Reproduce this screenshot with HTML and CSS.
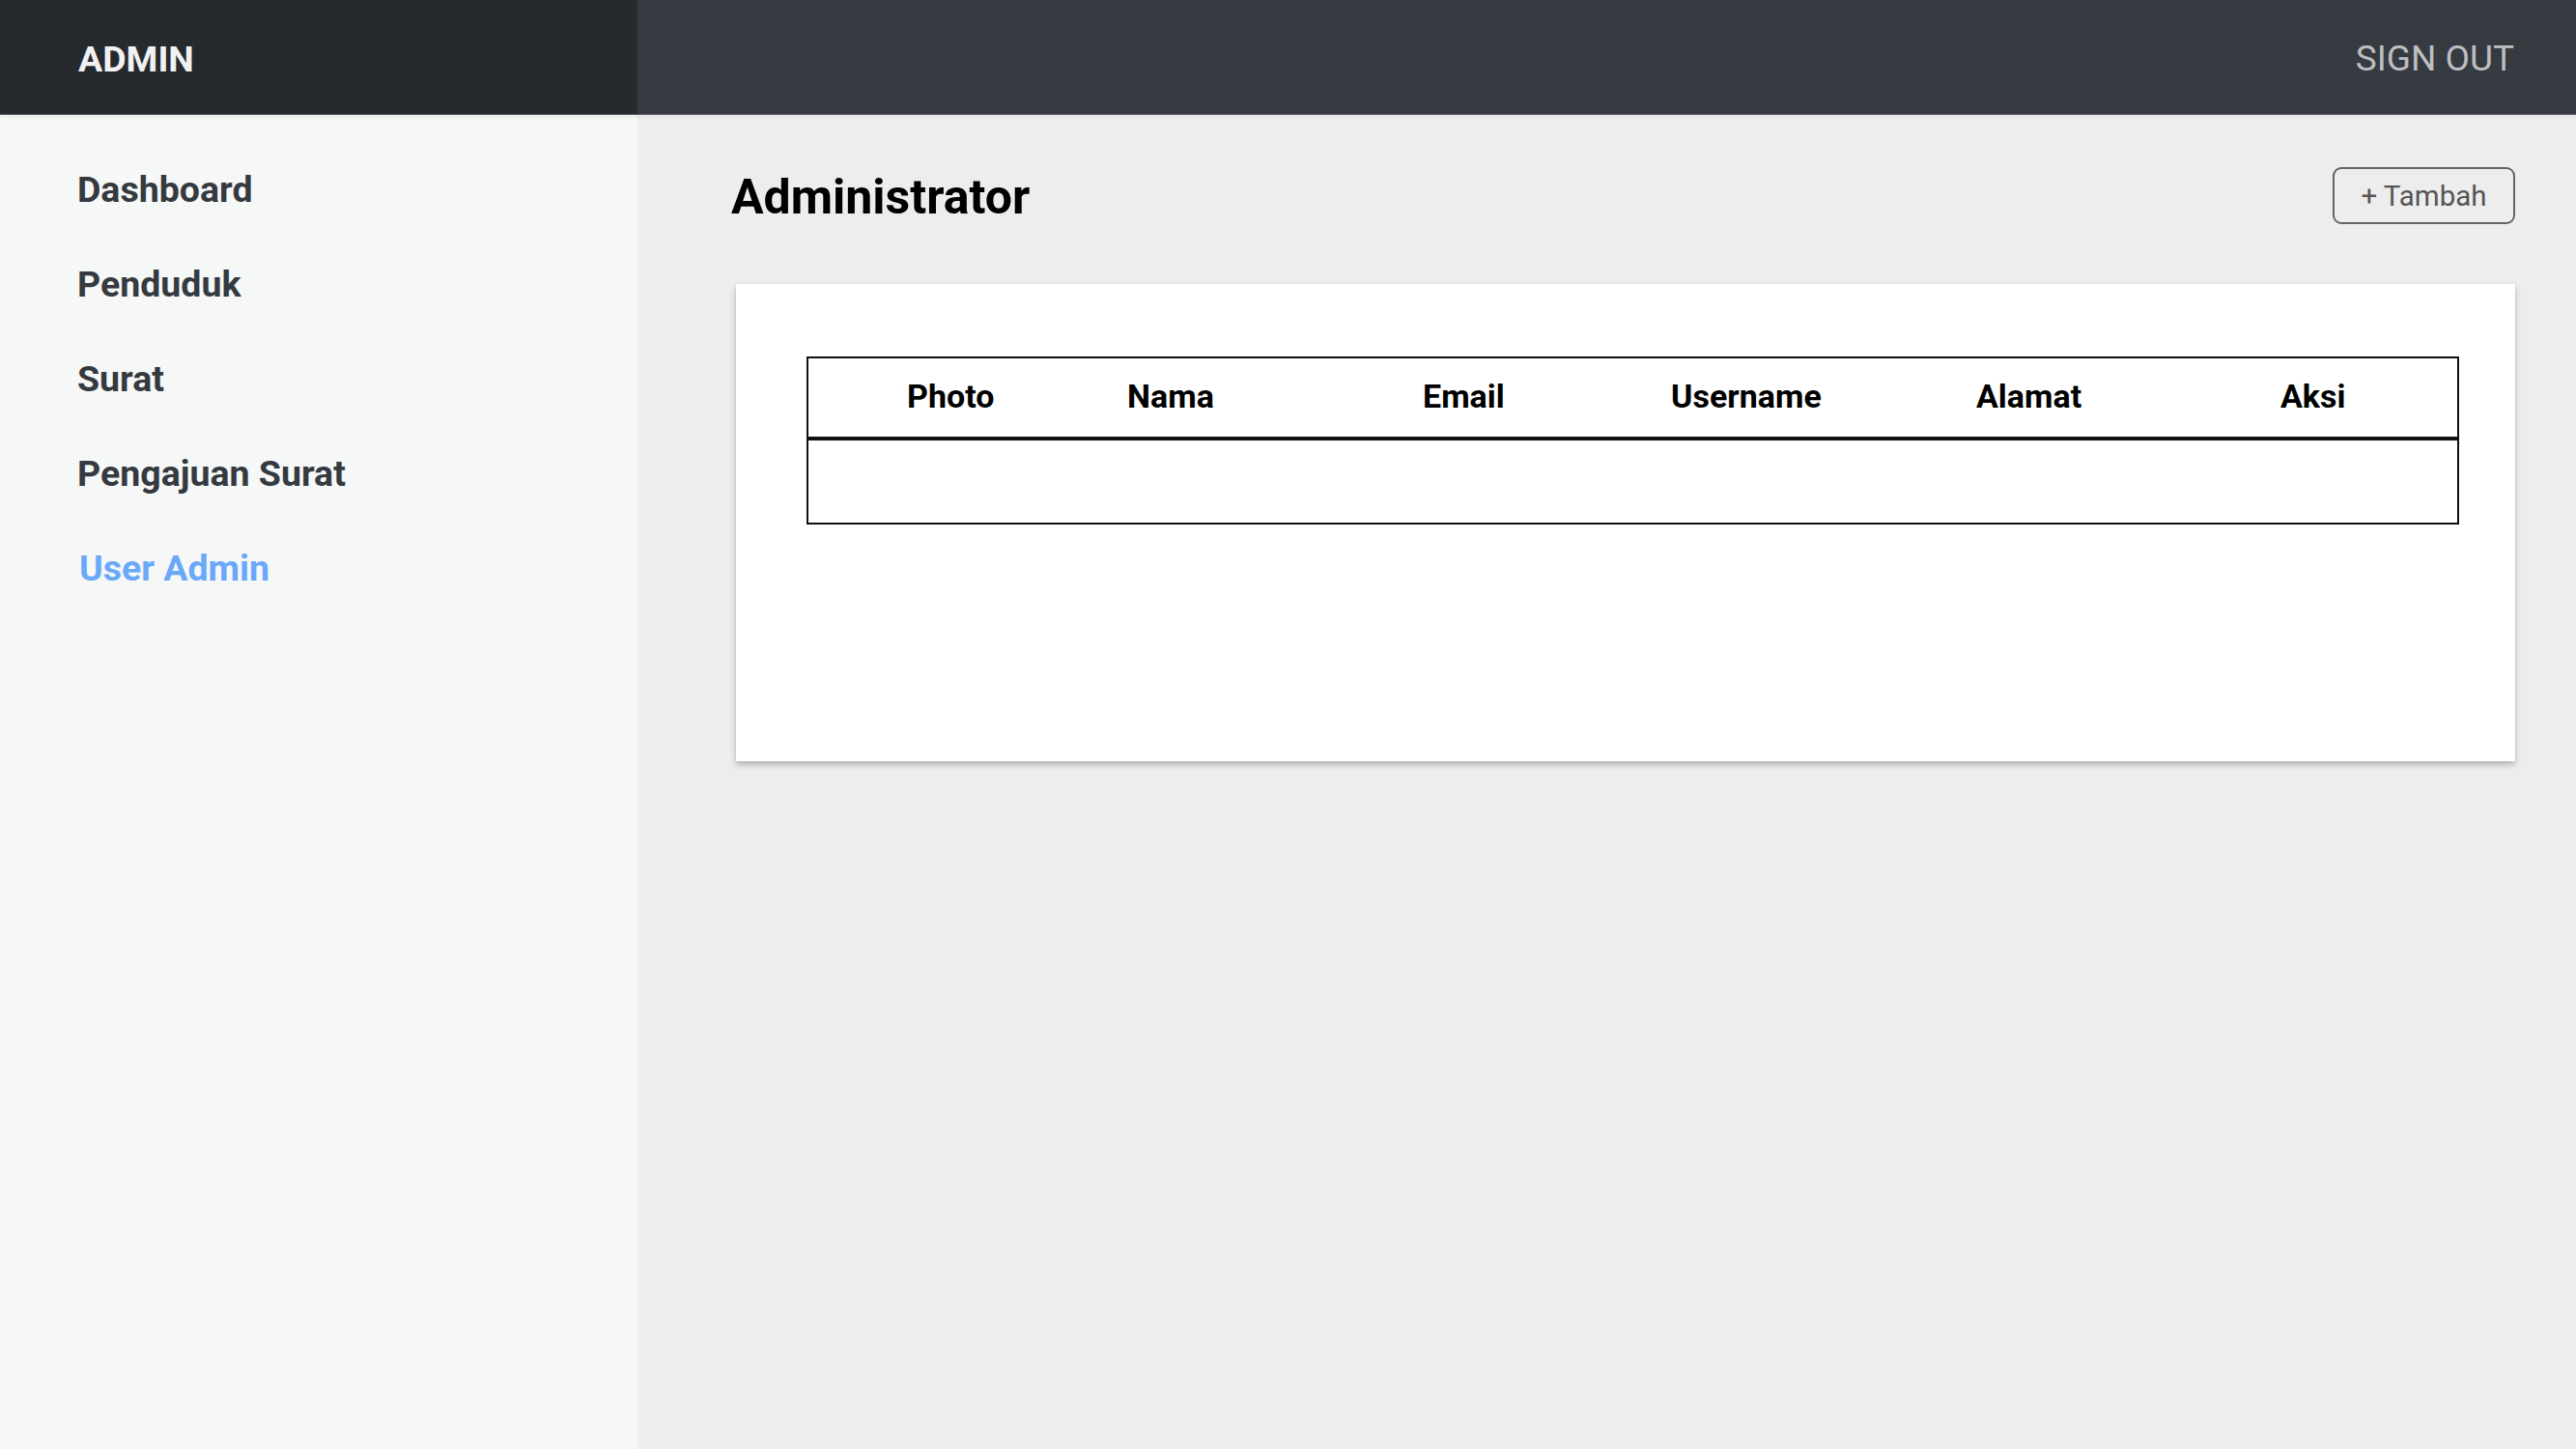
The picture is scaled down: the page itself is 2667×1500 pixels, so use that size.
FILE: index.html
```html
<!DOCTYPE html>
<html lang="id">
<head>
<meta charset="utf-8">
<title>Administrator</title>
<link rel="stylesheet" href="styles.css">
</head>
<body>
<header class="topbar">
  <div class="brand">ADMIN</div>
  <div class="topbar-right"><a class="signout" href="#">SIGN OUT</a></div>
</header>
<div class="layout">
  <nav class="sidebar">
    <a class="nav-link" href="#">Dashboard</a>
    <a class="nav-link" href="#">Penduduk</a>
    <a class="nav-link" href="#">Surat</a>
    <a class="nav-link" href="#">Pengajuan Surat</a>
    <a class="nav-link active" href="#">User Admin</a>
  </nav>
  <main class="main">
    <div class="page-head">
      <h1 class="page-title">Administrator</h1>
      <button class="btn-add" type="button">+ Tambah</button>
    </div>
    <section class="card">
      <table class="data-table">
        <colgroup>
          <col class="c1"><col class="c2"><col class="c3"><col class="c4"><col class="c5"><col class="c6">
        </colgroup>
        <thead>
          <tr>
            <th class="first">Photo</th>
            <th>Nama</th>
            <th>Email</th>
            <th>Username</th>
            <th>Alamat</th>
            <th>Aksi</th>
          </tr>
        </thead>
        <tbody>
          <tr><td></td><td></td><td></td><td></td><td></td><td></td></tr>
        </tbody>
      </table>
    </section>
  </main>
</div>
</body>
</html>
```

FILE: styles.css
```css
* { box-sizing: border-box; }

html, body {
  margin: 0;
  padding: 0;
}

body {
  font-family: Roboto, "Liberation Sans", Arial, sans-serif;
  background: #ededed;
  min-height: 1500px;
}

.topbar {
  display: flex;
  height: 119px;
  border-bottom: 1px solid #5b5f64;
  box-shadow: 0 2px 4px rgba(0, 0, 0, 0.06);
  position: relative;
  z-index: 1;
}

.brand {
  width: 660px;
  background: #26292e;
  color: #f1f1f1;
  font-size: 37.5px;
  font-weight: 700;
  display: flex;
  align-items: center;
  padding: 3px 0 0 81px;
}

.topbar-right {
  flex: 1;
  background: #363a41;
  display: flex;
  align-items: center;
  justify-content: flex-end;
  padding: 3px 64px 0 0;
}

.signout {
  color: #bdbec0;
  font-size: 37px;
  text-decoration: none;
}

.layout {
  display: flex;
  min-height: 1381px;
}

.sidebar {
  width: 660px;
  background: #f6f7f7;
  padding-top: 28px;
  display: flex;
  flex-direction: column;
}

.nav-link {
  display: block;
  padding-left: 80px;
  font-size: 37.5px;
  line-height: 98px;
  font-weight: 700;
  color: #343a40;
  text-decoration: none;
}

.nav-link.active {
  color: #6aa8f9;
  padding-left: 82px;
}

.main {
  flex: 1;
  background: #ededed;
  padding: 54px 63px 0 97px;
}

.page-head {
  display: flex;
  justify-content: space-between;
  align-items: flex-start;
}

.page-title {
  margin: 0;
  font-size: 50px;
  line-height: 62px;
  font-weight: 700;
  color: #000;
}

.btn-add {
  height: 59px;
  width: 189px;
  border: 2px solid #646464;
  border-radius: 9px;
  background: transparent;
  color: #555;
  font-family: Roboto, "Liberation Sans", Arial, sans-serif;
  font-size: 29.5px;
  padding: 0;
}

.card {
  margin: 59px 0 0 5px;
  background: #fff;
  padding: 75px 58px 245px 73px;
  box-shadow: 0 4px 6px rgba(0, 0, 0, 0.22), 0 0 3px rgba(0, 0, 0, 0.08);
}

.data-table {
  width: 100%;
  table-layout: fixed;
  border-collapse: separate;
  border-spacing: 0;
  border: 2px solid #111;
}

.c1 { width: 330px; }
.c2 { width: 306px; }
.c3 { width: 257px; }
.c4 { width: 316px; }
.c5 { width: 315px; }
.c6 { width: auto; }

.data-table th {
  text-align: left;
  font-size: 34px;
  line-height: 40px;
  font-weight: 700;
  color: #000;
  padding: 19px 0 22px 0;
  border-bottom: 4px solid #111;
}

.data-table th.first {
  padding-left: 102px;
}

.data-table td {
  height: 85px;
  padding: 0;
}
```
